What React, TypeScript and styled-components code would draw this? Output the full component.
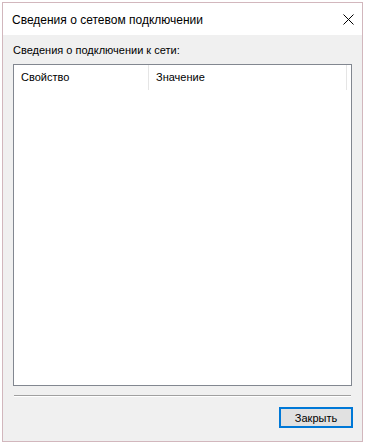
import React from "react";
import styled, { createGlobalStyle } from "styled-components";

const Global = createGlobalStyle`
  html, body { margin: 0; padding: 0; background: #ffffff; }
  body { font-family: "Liberation Sans", Arial, sans-serif; font-size: 11px; color: #000; }
`;

const Window = styled.div`
  margin: 2px 0 0 2px;
  width: 361px;
  height: 440px;
  box-sizing: border-box;
  border: 1px solid #d2b7bd;
  display: flex;
  flex-direction: column;
  background: #f0f0f0;
`;

const TitleBar = styled.div`
  height: 32px;
  background: #ffffff;
  display: flex;
  align-items: center;
  justify-content: space-between;
  padding: 1px 9px 0 9px;
  box-sizing: border-box;
  flex-shrink: 0;
`;

const Title = styled.span`
  font-size: 12px;
  color: #000;
`;

const CloseBtn = styled.div`
  width: 11px;
  height: 11px;
  display: flex;
  align-items: center;
  justify-content: center;
  margin-right: -1px;
`;

const Body = styled.div`
  flex: 1;
  display: flex;
  flex-direction: column;
  padding: 0 10px 13px 10px;
`;

const Label = styled.div`
  margin-top: 8px;
  height: 21px;
  line-height: 14px;
`;

const ListBox = styled.div`
  height: 322px;
  box-sizing: border-box;
  border: 1px solid #828790;
  background: #ffffff;
  display: flex;
  flex-direction: column;
`;

const HeaderRow = styled.div`
  display: flex;
  height: 25px;
`;

const HeaderCell = styled.div<{ $w?: number }>`
  width: ${(p) => (p.$w ? `${p.$w}px` : "auto")};
  flex: ${(p) => (p.$w ? "none" : "1")};
  box-sizing: border-box;
  padding-left: 7px;
  line-height: 24px;
  border-right: 1px solid #e5e5e5;
`;

const Separator = styled.div`
  margin: 9px 1px 0 1px;
  height: 1px;
  background: #a0a0a0;
  border-bottom: 1px solid #ffffff;
`;

const Footer = styled.div`
  display: flex;
  justify-content: flex-end;
  margin-top: 10px;
`;

const Button = styled.button`
  width: 74px;
  height: 21px;
  box-sizing: border-box;
  border: 2px solid #0078d7;
  background: #e1e1e1;
  font-family: inherit;
  font-size: 11px;
  color: #000;
  padding: 0;
  margin-right: -1px;
`;

export default function App() {
  return (
    <>
      <Global />
      <Window>
        <TitleBar>
          <Title>Сведения о сетевом подключении</Title>
          <CloseBtn>
            <svg width="11" height="11" viewBox="0 0 11 11">
              <path d="M0.5 0.5 L10.5 10.5 M10.5 0.5 L0.5 10.5" stroke="#000" strokeWidth="1" />
            </svg>
          </CloseBtn>
        </TitleBar>
        <Body>
          <Label>Сведения о подключении к сети:</Label>
          <ListBox>
            <HeaderRow>
              <HeaderCell $w={135}>Свойство</HeaderCell>
              <HeaderCell $w={198}>Значение</HeaderCell>
            </HeaderRow>
          </ListBox>
          <Separator />
          <Footer>
            <Button>Закрыть</Button>
          </Footer>
        </Body>
      </Window>
    </>
  );
}
